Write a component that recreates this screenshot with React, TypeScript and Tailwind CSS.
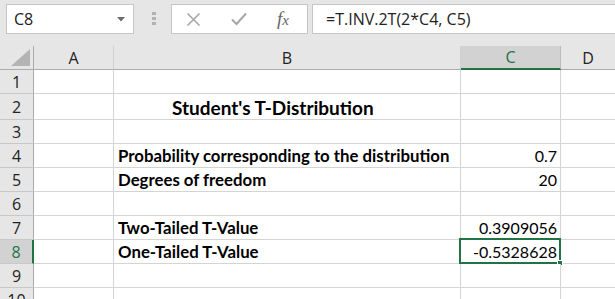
const cellFont = { fontFamily: "Lato, 'Open Sans', sans-serif" };
const uiFont = "font-['Open_Sans',_'Noto_Sans',_sans-serif]";

type Row = {
  n: number;
  h: string;
  b?: string;
  c?: string;
  title?: boolean;
  selected?: boolean;
};

const rows: Row[] = [
  { n: 1, h: "h-[24px]" },
  { n: 2, h: "h-[26px]", b: "Student's T-Distribution", title: true },
  { n: 3, h: "h-[24px]" },
  { n: 4, h: "h-[24px]", b: "Probability corresponding to the distribution", c: "0.7" },
  { n: 5, h: "h-[24px]", b: "Degrees of freedom", c: "20" },
  { n: 6, h: "h-[24px]" },
  { n: 7, h: "h-[24px]", b: "Two-Tailed T-Value", c: "0.3909056" },
  { n: 8, h: "h-[24px]", b: "One-Tailed T-Value", c: "-0.5328628", selected: true },
  { n: 9, h: "h-[24px]" },
  { n: 10, h: "h-[24px]" },
];

function FormulaBar() {
  return (
    <div className={`flex h-[46px] items-start bg-[#e6e6e6] pt-[4px] ${uiFont}`}>
      <div className="ml-[6px] flex h-[30px] w-[128px] items-center justify-between border border-[#c6c6c6] bg-white pl-[7px] pr-[8px] text-[16px] text-[#222]">
        <span>C8</span>
        <svg width="8" height="5" viewBox="0 0 8 5">
          <path d="M0 0h8L4 4.5z" fill="#6d6d6d" />
        </svg>
      </div>
      <div className="ml-[18px] mt-[8px] flex flex-col gap-[2px]">
        <div className="h-[3px] w-[4px] bg-[#b2b2b2]" />
        <div className="h-[3px] w-[4px] bg-[#b2b2b2]" />
        <div className="h-[3px] w-[4px] bg-[#b2b2b2]" />
      </div>
      <div className="ml-[15px] flex h-[30px] w-[137px] items-center border border-[#c6c6c6] bg-white">
        <svg className="ml-[14px]" width="15" height="15" viewBox="0 0 15 15">
          <path d="M1.5 1.5l12 12M13.5 1.5l-12 12" stroke="#a6a6a6" strokeWidth="1.6" />
        </svg>
        <svg className="ml-[30px]" width="16" height="14" viewBox="0 0 16 14">
          <path d="M1 7.5l4.5 4.5L15 1.5" stroke="#a6a6a6" strokeWidth="2" fill="none" />
        </svg>
        <span className="ml-[30px] font-['Liberation_Serif',_serif] text-[19px] italic text-[#666]">
          f<span className="text-[15px]">x</span>
        </span>
      </div>
      <div className="ml-[4px] flex h-[30px] flex-1 items-center border border-r-0 border-[#c6c6c6] bg-white pl-[13px] text-[16px] text-[#222]">
        =T.INV.2T(2*C4, C5)
      </div>
    </div>
  );
}

function ColumnHeader() {
  return (
    <div className={`flex h-[24px] bg-[#e6e6e6] text-[16px] text-[#222] ${uiFont}`}>
      <div className="relative w-[34px] shrink-0 border-r border-b border-[#ababab]">
        <svg className="absolute right-[3px] bottom-[3px]" width="19" height="17" viewBox="0 0 19 17">
          <path d="M19 0v17H0z" fill="#b4b4b4" />
        </svg>
      </div>
      <div className="flex w-[80px] shrink-0 items-center justify-center border-r border-b border-[#ababab] border-r-[#d0d0d0]">
        A
      </div>
      <div className="flex w-[347px] shrink-0 items-center justify-center border-r border-b border-[#ababab] border-r-[#d0d0d0]">
        B
      </div>
      <div className="flex w-[100px] shrink-0 items-center justify-center border-r border-r-[#bcbcbc] border-b-2 border-b-[#217346] bg-[#d2d2d2] text-[#217346]">
        C
      </div>
      <div className="flex flex-1 items-center justify-center border-b border-[#ababab]">D</div>
    </div>
  );
}

function SheetRow({ row }: { row: Row }) {
  return (
    <div className={`flex ${row.h}`}>
      <div
        className={`flex w-[34px] shrink-0 items-center justify-center border-b border-[#c8c8c8] text-[16px] ${uiFont} ${
          row.selected
            ? "border-r-2 border-r-[#217346] bg-[#d2d2d2] text-[#217346]"
            : "border-r border-r-[#ababab] bg-[#e6e6e6] text-[#222]"
        }`}
      >
        {row.n}
      </div>
      <div className="w-[80px] shrink-0 border-r border-b border-[#d4d4d4] bg-white" />
      <div
        className={`flex w-[347px] shrink-0 items-end whitespace-nowrap border-r border-b border-[#d4d4d4] bg-white font-bold leading-[22px] text-black ${
          row.title ? "pl-[58px] text-[19px]" : "pl-[4px] text-[16.8px]"
        }`}
        style={cellFont}
      >
        {row.b}
      </div>
      <div
        className="relative flex w-[100px] shrink-0 items-end justify-end border-r border-b border-[#d4d4d4] bg-white pr-[3px] text-[16px] leading-[22px] text-black"
        style={cellFont}
      >
        {row.c}
        {row.selected && (
          <>
            <div className="pointer-events-none absolute -top-[2px] -left-[2px] h-[26px] w-[102px] border-2 border-[#217346]" />
            <div className="absolute -right-[3px] -bottom-[3px] h-[6px] w-[6px] border border-white bg-[#217346]" />
          </>
        )}
      </div>
      <div className="flex-1 border-b border-[#d4d4d4] bg-white" />
    </div>
  );
}

export default function App() {
  return (
    <div className="h-[299px] w-[615px] overflow-hidden bg-white">
      <FormulaBar />
      <ColumnHeader />
      {rows.map((row) => (
        <SheetRow key={row.n} row={row} />
      ))}
    </div>
  );
}
